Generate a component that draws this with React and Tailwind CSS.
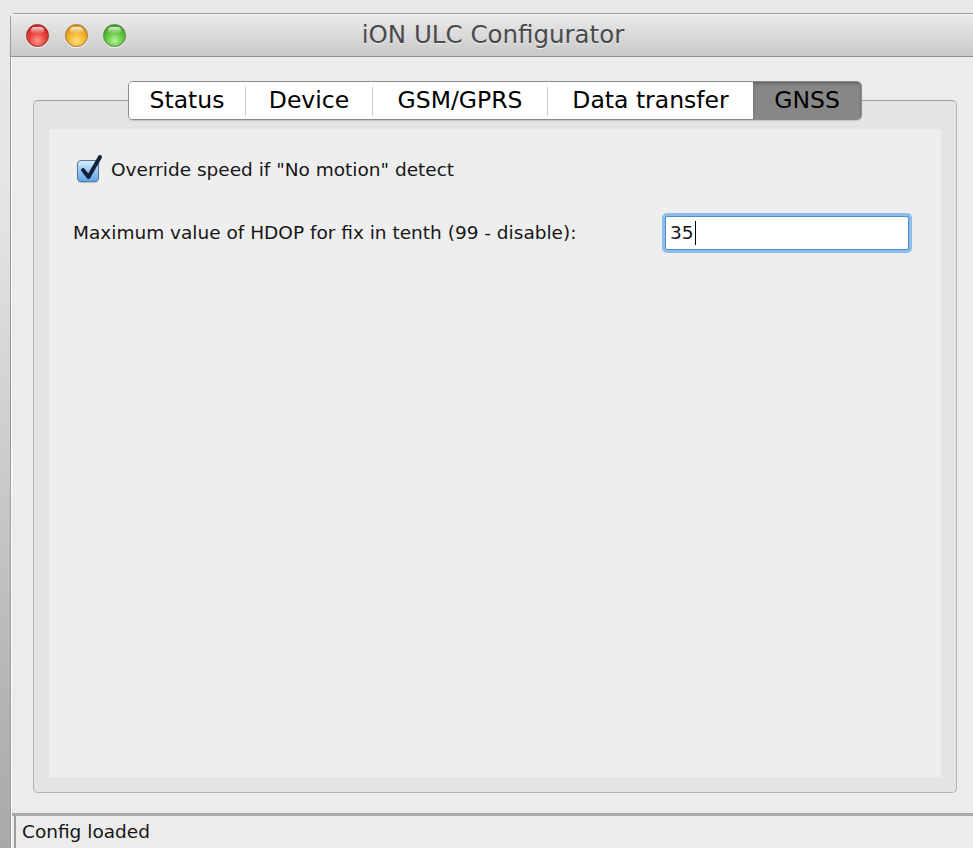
import React from "react";

const tabs = [
  { label: "Status", w: "w-[116px]" },
  { label: "Device", w: "w-[126px]" },
  { label: "GSM/GPRS", w: "w-[174px]" },
  { label: "Data transfer", w: "w-[205px]" },
  { label: "GNSS", w: "w-[108px]", active: true },
];

function TrafficLight({ color }) {
  const fills = {
    red: "bg-[radial-gradient(circle_at_50%_75%,#ff9a90_0%,#e8413a_45%,#b81d1a_100%)] border-[#9c2a26]",
    yellow: "bg-[radial-gradient(circle_at_50%_75%,#ffe27a_0%,#f2b12c_45%,#c9800e_100%)] border-[#a9782a]",
    green: "bg-[radial-gradient(circle_at_50%_75%,#b8f49a_0%,#5fc63e_45%,#2f8f1c_100%)] border-[#4d8a36]",
  };
  return (
    <div className={`w-[23px] h-[23px] rounded-full border ${fills[color]} shadow-[0_1px_1px_rgba(255,255,255,0.7)]`}>
      <div className="mx-auto mt-[2px] w-[13px] h-[7px] rounded-full bg-gradient-to-b from-white/80 to-white/0" />
    </div>
  );
}

function TabBar() {
  return (
    <div className="flex h-[39px] rounded-[5px] border border-[#8b8b8b] bg-[#f6f6f6] shadow-[0_1px_1px_rgba(0,0,0,0.15)] overflow-hidden text-[23.5px] text-black">
      {tabs.map((t, i) => (
        <React.Fragment key={t.label}>
          {i > 0 && !t.active && (
            <div className="self-center w-px h-[28px] bg-[#c9c9c9]" />
          )}
          <div
            className={
              t.active
                ? `${t.w} flex items-center justify-center bg-[#878787] shadow-[inset_0_2px_3px_rgba(0,0,0,0.25)]`
                : `${t.w} flex items-center justify-center bg-white`
            }
          >
            {t.label}
          </div>
        </React.Fragment>
      ))}
    </div>
  );
}

function Checkbox() {
  return (
    <div className="relative w-[23px] h-[23px]">
      <div className="w-[22px] h-[22px] mt-[1px] rounded-[4px] border border-[#5a7796] bg-gradient-to-b from-[#d6ebfd] via-[#96c8f5] to-[#5ea6ee] shadow-[0_1px_1px_rgba(0,0,0,0.2)]" />
      <svg className="absolute -top-[5px] left-[2px]" width="24" height="28" viewBox="0 0 24 28">
        <path d="M4 16 L9.5 23 L21 3" fill="none" stroke="#162036" strokeWidth="4" strokeLinecap="round" strokeLinejoin="round" />
      </svg>
    </div>
  );
}

export default function App() {
  return (
    <div className="w-[973px] h-[848px] overflow-hidden pt-[13px] pl-[10px] bg-[linear-gradient(to_bottom,#e9e9e9_0%,#e4e4e4_25%,#b6b6b6_80%,#a9a9a9_100%)] font-['DejaVu_Sans',sans-serif]">
      <div className="h-full flex flex-col rounded-tl-[5px] border-l border-t border-[#9b9b9b] bg-[#ececec]">
        {/* title bar */}
        <div className="relative h-[43px] flex items-center border-b border-[#8e8e8e] bg-gradient-to-b from-[#ebebeb] to-[#c9c9c9] shadow-[inset_0_1px_0_#f7f7f7]">
          <div className="flex gap-[15.5px] ml-[15px]">
            <TrafficLight color="red" />
            <TrafficLight color="yellow" />
            <TrafficLight color="green" />
          </div>
          <div className="absolute left-0 right-0 text-center text-[24.5px] text-[#4a4a4a] [text-shadow:0_1px_0_rgba(255,255,255,0.6)]">
            <span className="ml-[2px]">iON ULC Configurator</span>
          </div>
        </div>

        {/* tab pane */}
        <div className="flex-1 flex flex-col border-l border-white">
          <div className="relative mt-[43px] ml-[21px] mr-[16px] h-[693px] rounded-[5px] border border-[#b4b4b4] border-t-[#a0a0a0] bg-[#e4e4e4] pt-[28px] px-[15px] pb-[15px]">
            <div className="absolute -top-[20px] left-0 right-0 flex justify-center">
              <TabBar />
            </div>
            <div className="h-full bg-[#eeeeee] pt-[29px] pl-[24px] text-[18.5px] text-[#161616]">
              <div className="flex items-center gap-[11px] ml-[4px]">
                <Checkbox />
                <span className="-mt-[2px]">Override speed if "No motion" detect</span>
              </div>
              <div className="flex items-center mt-[32px]">
                <span className="w-[592px]">Maximum value of HDOP for fix in tenth (99 - disable):</span>
                <div className="w-[244px] h-[34px] rounded-[2px] border border-[#4f8ccb] bg-white shadow-[0_0_0_3px_#8dbdea] flex items-center pl-[4px]">
                  <span>35</span>
                  <span className="w-px h-[24px] bg-black ml-[1px]" />
                </div>
              </div>
            </div>
          </div>

          {/* status bar */}
          <div className="mt-[20px] flex-1 border-t-[3px] border-[#a9a9a9] flex">
            <div className="flex-1 ml-[2px] border-l-[2px] border-[#9d9d9d] pl-[6px] pt-[2px] text-[18.5px] text-[#161616]">
              Config loaded
            </div>
          </div>
        </div>
      </div>
    </div>
  );
}
